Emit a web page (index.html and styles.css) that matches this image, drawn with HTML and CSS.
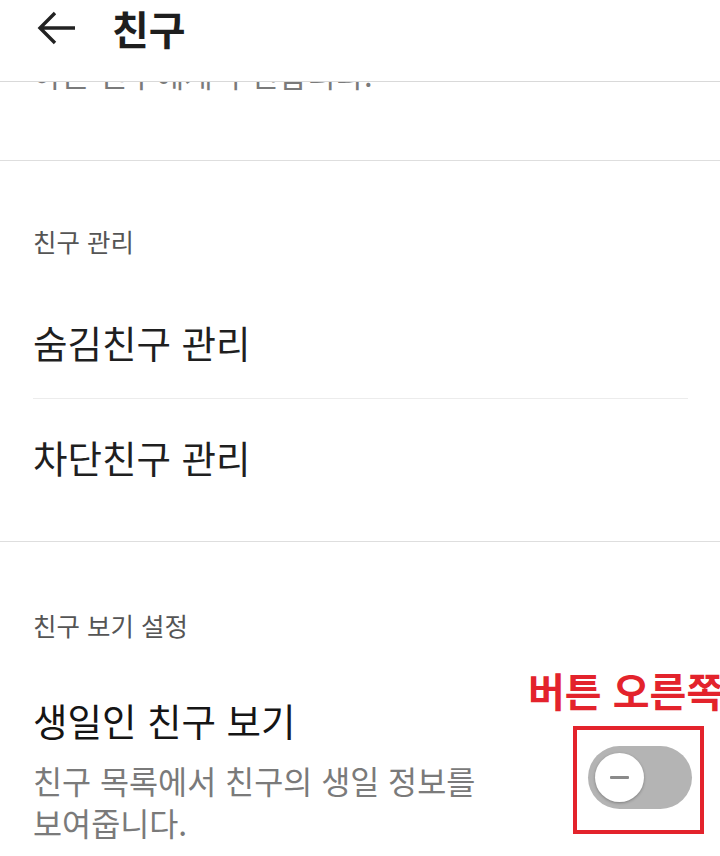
FILE: index.html
```html
<!DOCTYPE html>
<html lang="ko">

<head>
  <meta charset="UTF-8">
  <meta name="viewport" content="width=device-width, initial-scale=1.0">
  <title>친구</title>

  <link rel="stylesheet" href="styles.css">
</head>

<body>
  <!-- Top bar with back arrow and page title -->
  <header class="appbar">
    <svg class="back-icon" width="40" height="34" viewBox="0 0 40 34">
      <path d="M38 17H4M18 2L3 17l15 15" fill="none" stroke="#222" stroke-width="3.4" stroke-linejoin="miter"/>
    </svg>
    <h1 class="appbar-title">친구</h1>
  </header>

  <!-- The previous item is scrolled under the top bar, only its last line shows -->
  <div class="intro">
    <p class="intro-text">아는 친구에게 추천합니다.</p>
  </div>

  <!-- Friend management -->
  <section class="group group-manage">
    <h2 class="group-label">친구 관리</h2>
    <div class="row row-divided">숨김친구 관리</div>
    <div class="row">차단친구 관리</div>
  </section>

  <!-- Friend view settings -->
  <section class="group group-view">
    <h2 class="group-label">친구 보기 설정</h2>

    <div class="setting">
      <div class="setting-text">
        <div class="setting-title">생일인 친구 보기</div>
        <div class="setting-desc">친구 목록에서 친구의 생일 정보를<br>보여줍니다.</div>
      </div>

      <!-- The red box marks the switch -->
      <div class="switch-box">
        <span class="note">버튼 오른쪽</span>
        <div class="switch">
          <div class="switch-knob"><span class="switch-minus"></span></div>
        </div>
      </div>
    </div>
  </section>
</body>

</html>
```

FILE: styles.css
```css
/* Base font and no default margins */
body {
  margin: 0;
  padding: 0;
  background: #fff;
  font-family: "Noto Sans CJK KR", "Noto Sans", sans-serif;
  color: #222;
  overflow: hidden;
}

/* Top bar */
.appbar {
  height: 56px;
  padding: 0 0 25px 37px;
  border-bottom: 1px solid #d9d9d9;
  display: flex;
  align-items: center;
  gap: 35px;
}

.back-icon {
  display: block;
}

.appbar-title {
  margin: 0;
  font-size: 40px;
  font-weight: 700;
  line-height: 1;
  color: #1e1e1e;
}

/* Clipped text of the item above */
.intro {
  height: 78px;
  overflow: hidden;
  border-bottom: 1px solid #dedede;
}

.intro-text {
  margin: -29px 0 0 33px;
  font-size: 31px;
  line-height: 42px;
  color: #7a7a7a;
}

/* Groups of settings */
.group-manage {
  padding: 63px 0 28px;
  border-bottom: 1px solid #dedede;
}

.group-view {
  padding: 66px 0 0;
}

.group-label {
  margin: 0 0 0 33px;
  font-size: 25.5px;
  font-weight: 400;
  line-height: 34px;
  color: #555;
}

.row {
  height: 114px;
  margin: 0 32px 0 33px;
  display: flex;
  align-items: center;
  font-size: 37.5px;
  color: #1f1f1f;
}

.row-divided {
  margin-top: 26px;
  border-bottom: 1px solid #ececec;
}

/* Setting with a switch */
.setting {
  margin: 54px 16px 0 33px;
  display: flex;
  align-items: flex-start;
  justify-content: space-between;
}

.setting-title {
  font-size: 37.5px;
  line-height: 48px;
  color: #151515;
}

.setting-desc {
  margin-top: 15px;
  font-size: 31.6px;
  line-height: 42px;
  color: #7a7a7a;
}

/* Red annotation around the switch */
.switch-box {
  position: relative;
  margin-top: 30px;
  padding: 16px 8px 21px 11px;
  border: 4px solid #e3232c;
}

.note {
  position: absolute;
  left: -49px;
  top: -60px;
  white-space: nowrap;
  font-size: 40px;
  font-weight: 700;
  line-height: 1;
  color: #e3232c;
}

.switch {
  width: 104px;
  height: 63px;
  border-radius: 32px;
  background: #b4b4b4;
  display: flex;
  align-items: center;
  padding-left: 7px;
  box-sizing: border-box;
}

.switch-knob {
  width: 49px;
  height: 49px;
  border-radius: 50%;
  background: #fff;
  box-shadow: 0 1px 3px rgba(0, 0, 0, 0.3);
  display: flex;
  align-items: center;
  justify-content: center;
}

.switch-minus {
  width: 19px;
  height: 3px;
  border-radius: 1px;
  background: #8a8a8a;
}
```
